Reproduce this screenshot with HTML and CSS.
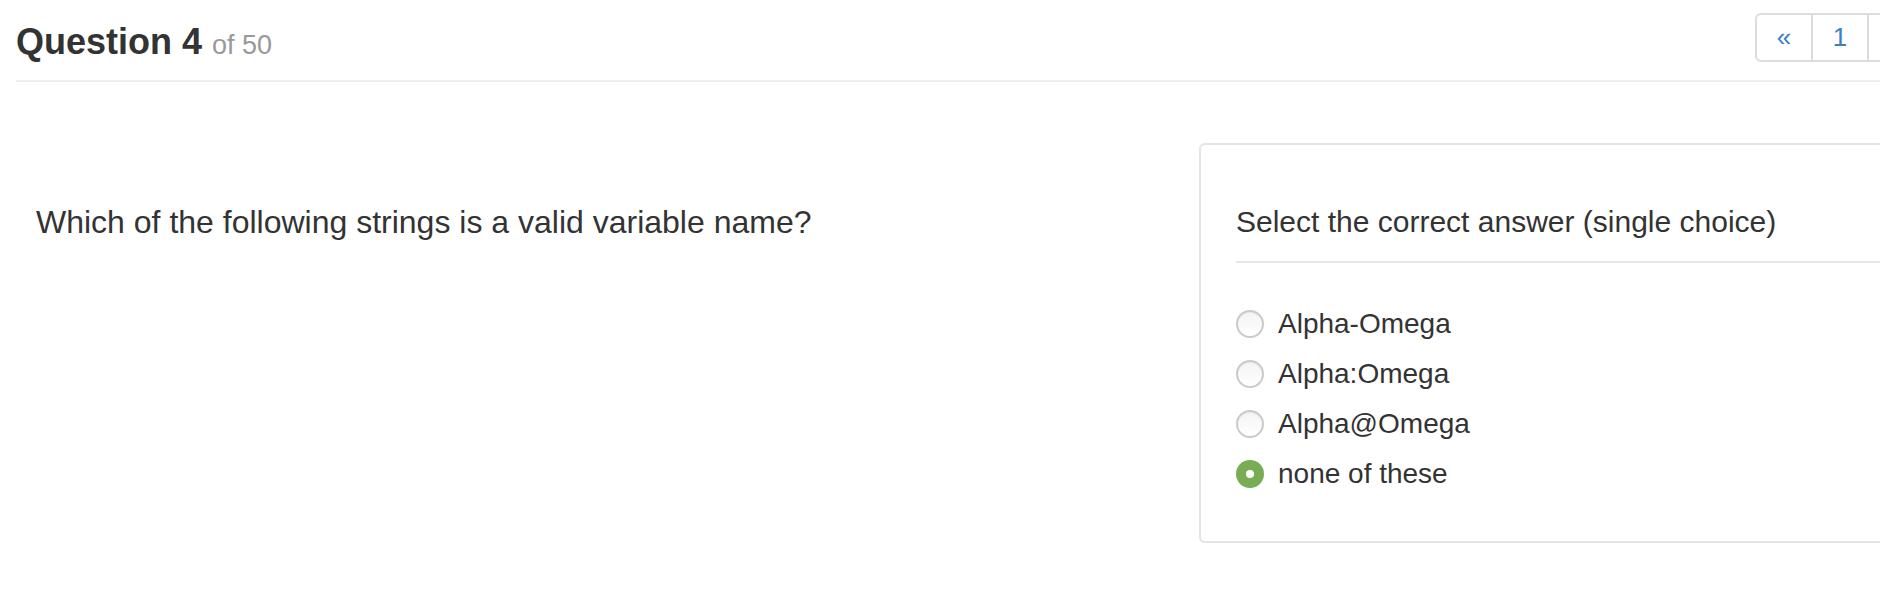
FILE: index.html
```html
<!DOCTYPE html>
<html lang="en">
<head>
<meta charset="utf-8">
<title>Question 4 of 50</title>
<link rel="stylesheet" href="styles.css">
</head>
<body>
<div class="page">
  <header class="page-header">
    <h1 class="title">Question 4 <small>of 50</small></h1>
    <ul class="pager">
      <li><a href="#">«</a></li>
      <li><a href="#">1</a></li>
      <li><a href="#">2</a></li>
    </ul>
  </header>
  <main class="content">
    <section class="question">
      <p>Which of the following strings is a valid variable name?</p>
    </section>
    <section class="card">
      <h4 class="card-title">Select the correct answer (single choice)</h4>
      <hr class="divider">
      <ul class="options">
        <li class="option"><span class="radio"></span><span class="label">Alpha-Omega</span></li>
        <li class="option"><span class="radio"></span><span class="label">Alpha:Omega</span></li>
        <li class="option"><span class="radio"></span><span class="label">Alpha@Omega</span></li>
        <li class="option"><span class="radio checked"></span><span class="label">none of these</span></li>
      </ul>
    </section>
  </main>
</div>
</body>
</html>
```

FILE: styles.css
```css
html, body {
  margin: 0;
  padding: 0;
  overflow: hidden;
  background: #fff;
}

body {
  font-family: "Liberation Sans", Arial, Helvetica, sans-serif;
  color: #333;
}

.page {
  width: 2600px;
  padding-left: 16px;
}

.page-header {
  display: flex;
  align-items: flex-start;
  border-bottom: 2px solid #eee;
}

.title {
  width: 1739px;
  margin: 22px 0 18px;
  font-size: 36px;
  line-height: 40px;
  font-weight: bold;
  color: #333;
}

.title small {
  font-size: 27px;
  line-height: 1;
  font-weight: normal;
  color: #999;
}

.pager {
  display: flex;
  list-style: none;
  margin: 13px 0 0;
  padding: 0;
}

.pager li a {
  display: block;
  width: 54px;
  height: 45px;
  line-height: 45px;
  border: 2px solid #ddd;
  margin-left: -2px;
  text-align: center;
  font-size: 26px;
  color: #3a80c4;
  text-decoration: none;
  background: #fff;
}

.pager li:first-child a {
  margin-left: 0;
  border-radius: 6px 0 0 6px;
}

.content {
  display: grid;
  grid-template-columns: 1183px 1fr;
  margin-top: 61px;
}

.question p {
  margin: 61px 0 0;
  padding-left: 20px;
  font-size: 32px;
  line-height: 37px;
}

.card {
  border: 2px solid #e4e4e4;
  border-radius: 6px;
  padding: 59px 0 42px 35px;
  box-shadow: 0 1px 1px rgba(0, 0, 0, 0.04);
}

.card-title {
  margin: 0;
  font-size: 30px;
  line-height: 36px;
  font-weight: normal;
}

.divider {
  margin: 21px 0 36px;
  border: 0;
  border-top: 2px solid #e6e6e6;
}

.options {
  list-style: none;
  margin: 0;
  padding: 0;
}

.option {
  display: flex;
  align-items: center;
  gap: 14px;
  height: 50px;
  font-size: 28px;
}

.radio {
  box-sizing: border-box;
  width: 28px;
  height: 28px;
  border-radius: 50%;
  border: 2px solid #cbcbcb;
  background: linear-gradient(#f4f4f4, #fff);
  box-shadow: inset 0 1px 1px rgba(0, 0, 0, 0.06);
  flex: none;
  position: relative;
}

.radio.checked {
  border: none;
  background: #79ad54;
  box-shadow: none;
}

.radio.checked::after {
  content: "";
  position: absolute;
  left: 10px;
  top: 10px;
  width: 8px;
  height: 8px;
  border-radius: 50%;
  background: #fff;
}
```
